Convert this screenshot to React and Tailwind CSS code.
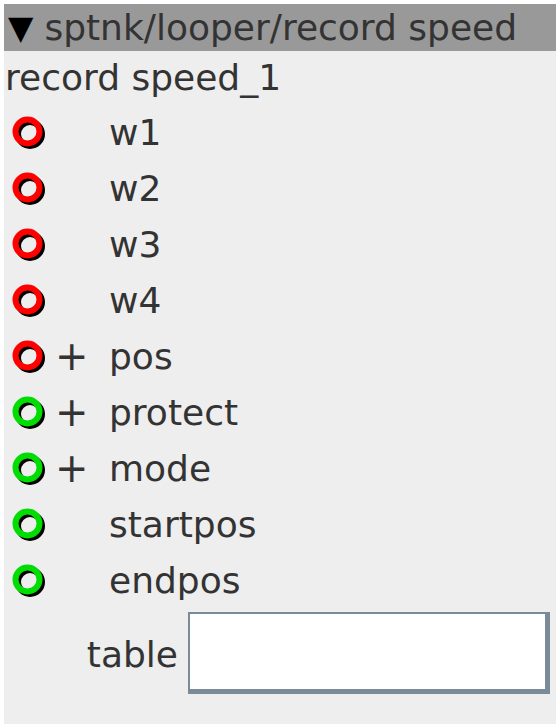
import React from "react";

const rows = [
  { name: "w1", color: "#ff0000", plus: false },
  { name: "w2", color: "#ff0000", plus: false },
  { name: "w3", color: "#ff0000", plus: false },
  { name: "w4", color: "#ff0000", plus: false },
  { name: "pos", color: "#ff0000", plus: true },
  { name: "protect", color: "#00dd00", plus: true },
  { name: "mode", color: "#00dd00", plus: true },
  { name: "startpos", color: "#00dd00", plus: false },
  { name: "endpos", color: "#00dd00", plus: false },
];

const Port = ({ color }) => (
  <svg width="38" height="38" viewBox="0 0 38 38">
    <circle cx="18" cy="18" r="12" fill="none" stroke="#000" strokeWidth="6" />
    <circle cx="15.5" cy="15.5" r="12" fill="none" stroke={color} strokeWidth="6" />
  </svg>
);

const App = () => {
  return (
    <div className="w-[560px] h-[728px] bg-white p-1 font-['DejaVu_Sans',sans-serif] text-[#333333]">
      <div className="h-[720px] bg-[#eeeeee] flex flex-col">
        {/* Header */}
        <div className="h-[47px] bg-[#999999] flex items-center gap-[11px] pl-[4px] text-[36px] leading-none">
          <span className="text-black text-[33px]">▼</span>
          <span>sptnk/looper/record speed</span>
        </div>

        <div className="h-[54px] flex items-center pl-[1px] text-[36px]">record speed_1</div>

        {rows.map((r) => (
          <div key={r.name} className="h-[56px] flex items-center text-[36px]">
            <div className="w-[51px] pl-[8px] pt-[3px] flex items-center">
              <Port color={r.color} />
            </div>
            <div className="w-[54px] leading-none text-[40px] pb-[3px] text-[#333333]">
              {r.plus ? "+" : ""}
            </div>
            <span>{r.name}</span>
          </div>
        ))}

        {/* table row */}
        <div className="flex items-center mt-[3px] text-[36px]">
          <div className="w-[184px] text-right pr-[10px] pt-[4px]">table</div>
          <div className="w-[362px] h-[82px] bg-white border-t-2 border-l-2 border-r-[5px] border-b-[5px] border-[#7b8a99]" />
        </div>
      </div>
    </div>
  );
};

export default App;
